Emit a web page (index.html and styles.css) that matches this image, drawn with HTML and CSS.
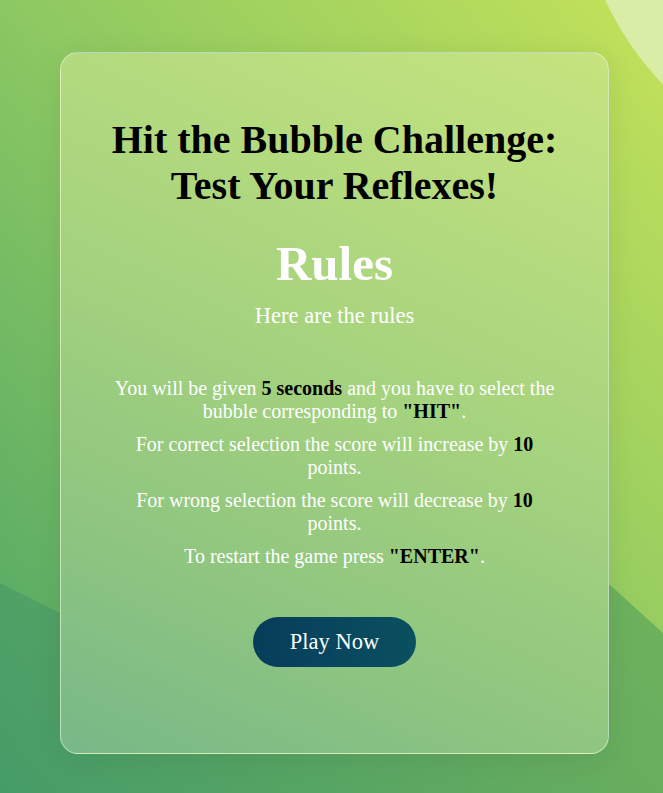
FILE: index.html
```html
<!DOCTYPE html>
<html lang="en">
<head>
<meta charset="utf-8">
<title>Hit the Bubble Challenge</title>
<link rel="stylesheet" href="styles.css">
</head>
<body>
<div class="page">
  <main class="card">
    <h1 class="title">Hit the Bubble Challenge: Test Your Reflexes!</h1>
    <h2 class="rules-heading">Rules</h2>
    <p class="subtitle">Here are the rules</p>
    <div class="rules">
      <p class="rule">You will be given <b>5 seconds</b> and you have to select the bubble corresponding to <b>"HIT"</b>.</p>
      <p class="rule">For correct selection the score will increase by <b>10</b> points.</p>
      <p class="rule">For wrong selection the score will decrease by <b>10</b> points.</p>
      <p class="rule">To restart the game press <b>"ENTER"</b>.</p>
    </div>
    <button class="play-btn" type="button">Play Now</button>
  </main>
</div>
</body>
</html>
```

FILE: styles.css
```css
* { box-sizing: border-box; }

html, body {
  margin: 0;
  padding: 0;
}

body {
  font-family: "Liberation Serif", "Times New Roman", serif;
  width: 663px;
  height: 793px;
  overflow: hidden;
  background: linear-gradient(to top right, #469c68 0%, #68ae5e 50%, #80bc58 100%);
}

.page {
  position: relative;
  width: 663px;
  height: 793px;
  padding: 52px 0 0 60px;
  overflow: hidden;
}

/* light background shape */
.page::before {
  content: "";
  position: absolute;
  inset: 0;
  background: linear-gradient(to top right, #4ca466 0%, #8cc862 50%, #c4e25a 100%);
  clip-path: polygon(0 0, 100% 0, 100% 633px, 610px 585px, 60px 613px, 0 583px);
  z-index: 0;
}

/* pale circle top-right */
.page::after {
  content: "";
  position: absolute;
  left: 576px;
  top: -445px;
  width: 626px;
  height: 626px;
  border-radius: 50%;
  background: linear-gradient(200deg, #e2f2b4, #d8eca4);
  z-index: 0;
}

.card {
  position: relative;
  z-index: 1;
  width: 549px;
  display: flex;
  flex-direction: column;
  align-items: center;
  text-align: center;
  padding: 40px 50px 86px;
  background: linear-gradient(25deg, #78b888 0%, #8ec580 25%, #a6d37e 55%, #c6e47f 100%);
  border: 1px solid rgba(255, 255, 255, 0.45);
  border-radius: 18px;
  box-shadow: 0 4px 30px rgba(0, 0, 0, 0.08);
}

.title {
  margin: 24px 0 0;
  font-size: 40px;
  line-height: 46px;
  font-weight: 700;
  color: #000;
}

.rules-heading {
  margin: 27px 0 0;
  font-size: 49px;
  line-height: 56px;
  font-weight: 700;
  color: #fff;
}

.subtitle {
  margin: 11px 0 0;
  font-size: 22.5px;
  line-height: 26px;
  color: #fff;
}

.rules {
  margin-top: 48px;
  display: flex;
  flex-direction: column;
  gap: 10px;
}

.rule {
  margin: 0;
  font-size: 20px;
  line-height: 23px;
  color: #fff;
}

.rule b {
  color: #000;
  font-weight: 700;
}

.play-btn {
  margin-top: 49px;
  padding: 12px 37px;
  border: none;
  border-radius: 25px;
  background: linear-gradient(to right, #073d5a, #0a5060);
  color: #fff;
  font-family: "Liberation Serif", "Times New Roman", serif;
  font-size: 22.5px;
  line-height: 26px;
  cursor: pointer;
}
```
